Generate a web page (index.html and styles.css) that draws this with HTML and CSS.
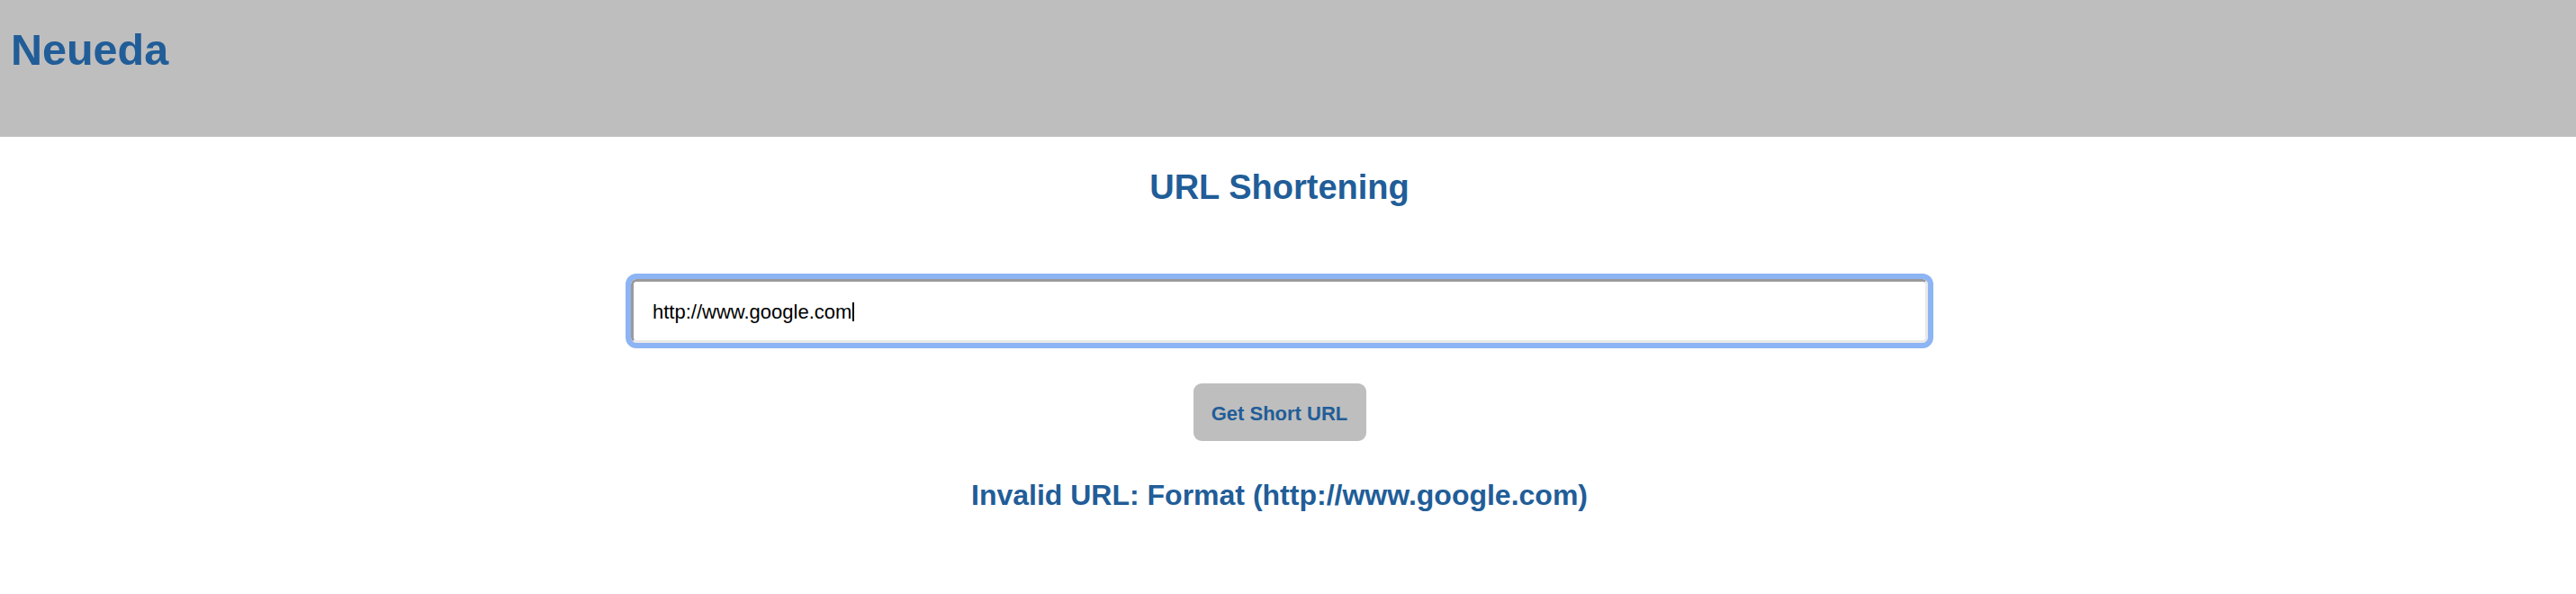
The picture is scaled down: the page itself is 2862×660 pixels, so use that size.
FILE: index.html
```html
<!DOCTYPE html>
<html lang="en">
<head>
<meta charset="utf-8">
<title>Neueda - URL Shortening</title>
<link rel="stylesheet" href="styles.css">
</head>
<body>
<header class="topbar">
  <h1 class="brand">Neueda</h1>
</header>
<main class="content">
  <h2 class="title">URL Shortening</h2>
  <div class="url-input" role="textbox" aria-label="URL">http://www.google.com<span class="caret"></span></div>
  <button class="submit" type="button">Get Short URL</button>
  <h3 class="message">Invalid URL: Format (http://www.google.com)</h3>
</main>
</body>
</html>
```

FILE: styles.css
```css
html, body {
  margin: 0;
  padding: 0;
  background: #ffffff;
}

body {
  font-family: "Liberation Sans", Arial, Helvetica, sans-serif;
  color: #215d98;
}

.topbar {
  box-sizing: border-box;
  height: 152px;
  background: #bebebe;
  padding: 27px 0 0 12px;
}

.brand {
  margin: 0;
  font-size: 48.5px;
  line-height: 56px;
  font-weight: bold;
  color: #215d98;
}

.content {
  display: flex;
  flex-direction: column;
  align-items: center;
  padding: 0 19px 0 0;
}

.title {
  margin: 34px 0 0 0;
  font-size: 38px;
  line-height: 44px;
  font-weight: bold;
  color: #215d98;
}

.url-input {
  box-sizing: border-box;
  margin-top: 80px;
  width: 1441px;
  height: 71px;
  display: flex;
  align-items: center;
  padding: 2px 0 0 21px;
  border-style: solid;
  border-width: 3px;
  border-color: #9a9a9a #e9e9e9 #e9e9e9 #9a9a9a;
  border-radius: 6px;
  outline: 6px solid #8db4f4;
  outline-offset: 0;
  background: #ffffff;
  font-family: "Liberation Sans", Arial, Helvetica, sans-serif;
  font-size: 22px;
  color: #000000;
}

.caret {
  display: inline-block;
  width: 2px;
  height: 21px;
  margin-left: 1px;
  background: #000000;
  align-self: center;
}

.submit {
  box-sizing: border-box;
  margin-top: 45px;
  width: 192px;
  height: 64px;
  padding: 3px 0 0 0;
  border: none;
  border-radius: 9px;
  background: #bebebe;
  font-family: "Liberation Sans", Arial, Helvetica, sans-serif;
  font-size: 22px;
  font-weight: bold;
  color: #215d98;
}

.message {
  margin: 42px 0 0 0;
  font-size: 32px;
  line-height: 37px;
  font-weight: bold;
  color: #215d98;
}
```
